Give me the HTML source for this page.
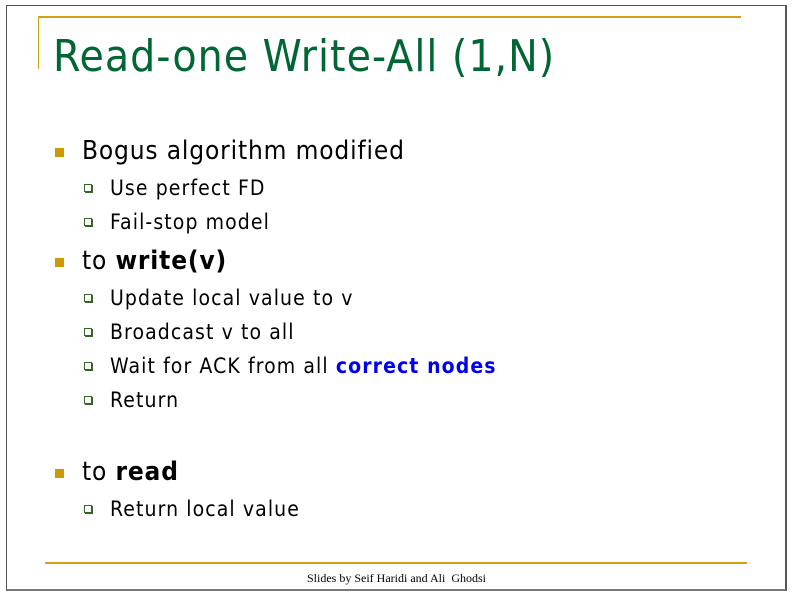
<!DOCTYPE html>
<html><head><meta charset="utf-8"><style>
body{margin:0;width:793px;height:597px;background:#fff;position:relative;overflow:hidden;font-family:"DejaVu Sans Condensed","Liberation Sans",sans-serif;}
.frame{position:absolute;left:6px;top:5px;width:778px;height:583px;border:1px solid #555;border-right:2px solid #555;border-bottom:2px solid #777;}
.gl{position:absolute;background:#d4a017;}
.t{position:absolute;white-space:nowrap;color:#000;}
.title{left:53px;top:31px;font-size:44px;color:#006633;letter-spacing:1px;}
.l1{font-size:26px;left:82px;letter-spacing:0.85px;}
.l2{font-size:21px;left:110px;letter-spacing:1.1px;}
.b1{position:absolute;left:55px;width:9px;height:9px;background:#cc9900;}
.b2{position:absolute;left:84px;width:6px;height:6px;border:1px solid #336622;box-shadow:1px 1px 0 #336622;}
</style></head><body>
<div class="frame"></div>
<div class="gl" style="left:38px;top:16px;width:703px;height:2px"></div>
<div class="gl" style="left:38px;top:16px;width:1px;height:53px"></div>
<div class="t title">Read-one Write-All (1,N)</div>

<div class="b1" style="top:148px"></div><div class="t l1" style="top:136px">Bogus algorithm modified</div>
<div class="b2" style="top:184px"></div><div class="t l2" style="top:176px">Use perfect FD</div>
<div class="b2" style="top:218px"></div><div class="t l2" style="top:210px">Fail-stop model</div>
<div class="b1" style="top:258px"></div><div class="t l1" style="top:246px">to <b>write(v)</b></div>
<div class="b2" style="top:294px"></div><div class="t l2" style="top:286px">Update local value to v</div>
<div class="b2" style="top:328px"></div><div class="t l2" style="top:320px">Broadcast v to all</div>
<div class="b2" style="top:362px"></div><div class="t l2" style="top:354px">Wait for ACK from all <b style="color:#0000ee">correct nodes</b></div>
<div class="b2" style="top:396px"></div><div class="t l2" style="top:388px">Return</div>
<div class="b1" style="top:469px"></div><div class="t l1" style="top:457px">to <b>read</b></div>
<div class="b2" style="top:505px"></div><div class="t l2" style="top:497px">Return local value</div>

<div class="gl" style="left:45px;top:562px;width:702px;height:2px"></div>
<div class="t" style="left:0;width:793px;text-align:center;top:571px;font-family:'Liberation Serif',serif;font-size:12px">Slides by Seif Haridi and Ali&nbsp; Ghodsi</div>
</body></html>
